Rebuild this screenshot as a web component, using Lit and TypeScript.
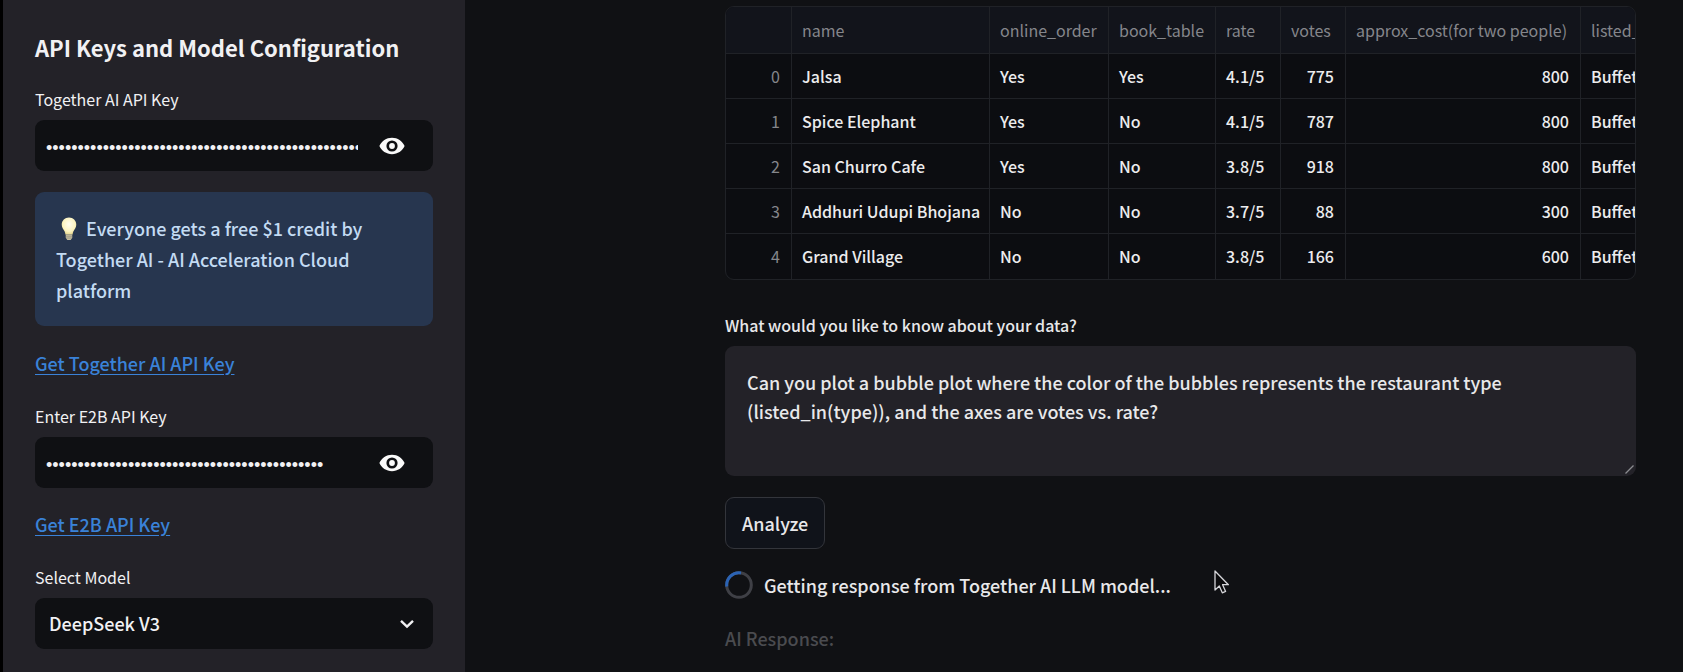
import { LitElement, html, css } from "lit";
import { customElement, property, state } from "lit/decorators.js";

interface Row {
  name: string;
  onlineOrder: string;
  bookTable: string;
  rate: string;
  votes: number;
  cost: number;
  listedIn: string;
}

const ROWS: Row[] = [
  { name: "Jalsa", onlineOrder: "Yes", bookTable: "Yes", rate: "4.1/5", votes: 775, cost: 800, listedIn: "Buffet" },
  { name: "Spice Elephant", onlineOrder: "Yes", bookTable: "No", rate: "4.1/5", votes: 787, cost: 800, listedIn: "Buffet" },
  { name: "San Churro Cafe", onlineOrder: "Yes", bookTable: "No", rate: "3.8/5", votes: 918, cost: 800, listedIn: "Buffet" },
  { name: "Addhuri Udupi Bhojana", onlineOrder: "No", bookTable: "No", rate: "3.7/5", votes: 88, cost: 300, listedIn: "Buffet" },
  { name: "Grand Village", onlineOrder: "No", bookTable: "No", rate: "3.8/5", votes: 166, cost: 600, listedIn: "Buffet" },
];

const base = css`
  *,
  *::before,
  *::after {
    box-sizing: border-box;
  }
  button,
  input,
  select,
  textarea {
    margin: 0;
    border: 0;
    font-family: inherit;
    font-weight: inherit;
    color: inherit;
  }
`;

@customElement("secret-field")
export class SecretField extends LitElement {
  @property() label = "";
  @property() value = "";
  @state() private shown = false;

  static styles = [
    base,
    css`
      :host {
        display: block;
      }
      .label {
        display: block;
        height: 33px;
        font-size: 16px;
        font-weight: 400;
        line-height: 24px;
      }
      .box {
        display: flex;
        height: 51px;
        border-radius: 9px;
        background: #0f1013;
      }
      .input {
        flex: 1;
        min-width: 0;
        margin: 0 7px 0 11px;
        padding: 5px 0 0;
        background: transparent;
        font-family: "Liberation Sans", sans-serif;
        font-size: 18px;
        outline: none;
      }
      .toggle {
        display: grid;
        place-items: center;
        width: 54px;
        margin-right: 14px;
        padding: 0;
        background: transparent;
        cursor: pointer;
      }
    `,
  ];

  render() {
    return html`
      <label class="label" for="field">${this.label}</label>
      <div class="box">
        <input
          class="input"
          id="field"
          type=${this.shown ? "text" : "password"}
          autocomplete="off"
          .value=${this.value}
        />
        <button
          class="toggle"
          type="button"
          aria-label="Show password text"
          @click=${() => (this.shown = !this.shown)}
        >
          <svg width="26" height="18" viewBox="0 0 26 18" aria-hidden="true">
            <path
              fill="#fafafa"
              fill-rule="evenodd"
              d="M13 .8C7.400.8 2.500 4.200.4 9c2.100 4.800 7 8.200 12.600 8.200S23.500 13.800 25.600 9C23.500 4.200 18.600.8 13 .8Zm0 13.800a5.600 5.600 0 1 1 0-11.200 5.600 5.600 0 0 1 0 11.200Zm0-2.700a2.900 2.900 0 1 0 0-5.800 2.900 2.900 0 0 0 0 5.800Z"
            />
          </svg>
        </button>
      </div>
    `;
  }
}

@customElement("config-sidebar")
export class ConfigSidebar extends LitElement {
  static styles = [
    base,
    css`
      :host {
        display: block;
        padding: 30px 32px 22px;
        background: #232228;
        color: #f1f1f3;
      }
      .title {
        margin: 0 0 23px;
        font-size: 22px;
        font-weight: 700;
        line-height: 34px;
      }
      .info {
        margin: 21px 0 22px;
        padding: 21px 21px 20px;
        border-radius: 9px;
        background: #27364f;
        color: #c3dbf3;
        font-size: 18px;
        line-height: 31px;
      }
      .info-text {
        margin: 0;
      }
      .bulb {
        margin: 0 5px 0 5px;
        vertical-align: -5px;
      }
      .link {
        display: block;
        width: fit-content;
        color: #3a82d8;
        font-size: 18px;
        line-height: 31px;
        text-underline-offset: 3px;
      }
      .link-first {
        margin-bottom: 25px;
      }
      .link-second {
        margin: 21px 0 25px;
      }
      .label {
        display: block;
        height: 33px;
        font-size: 16px;
        font-weight: 400;
        line-height: 24px;
      }
      .select-box {
        display: grid;
        align-items: center;
      }
      .select,
      .chevron {
        grid-area: 1 / 1;
      }
      .select {
        appearance: none;
        width: 100%;
        height: 51px;
        padding: 0 48px 2px 14px;
        border-radius: 9px;
        background: #0f1013;
        font-size: 18px;
      }
      .chevron {
        justify-self: end;
        margin-right: 18px;
        pointer-events: none;
      }
    `,
  ];

  render() {
    return html`
      <h2 class="title">API Keys and Model Configuration</h2>
      <secret-field label="Together AI API Key" .value=${"x".repeat(64)}></secret-field>
      <div class="info">
        <p class="info-text">
          <svg class="bulb" width="16" height="24" viewBox="0 0 16 26" aria-hidden="true">
            <defs>
              <radialGradient id="glow" cx="0.5" cy="0.4" r="0.6">
                <stop offset="0" stop-color="#fffdf0" />
                <stop offset="0.7" stop-color="#fbf3c0" />
                <stop offset="1" stop-color="#e6d78e" />
              </radialGradient>
            </defs>
            <path
              fill="url(#glow)"
              d="M8 .5C3.500.5.1 3.900.1 8.300c0 3.300 2.100 4.900 3.200 7.300.5 1.100.6 2.400.8 3.400h7.800c.2-1 .3-2.300.8-3.400 1.100-2.400 3.200-4 3.200-7.300C15.900 3.900 12.500.5 8 .5Z"
            />
            <path fill="#c6bf9f" d="M4.500 19h7v3.500L9.800 25H6.200l-1.700-2.500Z" />
            <path stroke="#8f8b7c" stroke-width="0.800" d="M4.500 20.800h7M4.800 22.800h6.400" />
          </svg>
          Everyone gets a free $1 credit by Together AI - AI Acceleration Cloud platform
        </p>
      </div>
      <a class="link link-first" href="#together">Get Together AI API Key</a>
      <secret-field label="Enter E2B API Key" .value=${"x".repeat(44)}></secret-field>
      <a class="link link-second" href="#e2b">Get E2B API Key</a>
      <label class="label" for="model">Select Model</label>
      <div class="select-box">
        <select class="select" id="model">
          <option>DeepSeek V3</option>
        </select>
        <svg class="chevron" width="16" height="10" viewBox="0 0 16 10" aria-hidden="true">
          <path fill="none" stroke="#f1f1f3" stroke-width="2.400" d="M2 1.800 8 7.600l6-5.800" />
        </svg>
      </div>
    `;
  }
}

@customElement("data-preview")
export class DataPreview extends LitElement {
  @property({ attribute: false }) rows: Row[] = [];

  static styles = [
    base,
    css`
      :host {
        display: block;
        overflow: hidden;
        border: 1px solid #202227;
        border-radius: 9px;
        background: #0c0d11;
      }
      .table {
        width: 1046px;
        border-collapse: separate;
        border-spacing: 0;
        table-layout: fixed;
        font-size: 16px;
        line-height: 24px;
        color: #ececee;
      }
      .c-index {
        width: 66px;
      }
      .c-name {
        width: 198px;
      }
      .c-online {
        width: 119px;
      }
      .c-book {
        width: 107px;
      }
      .c-small {
        width: 65px;
      }
      .c-cost {
        width: 235px;
      }
      .head,
      .cell {
        height: 45px;
        padding: 0 10px 1px;
        border-right: 1px solid #202227;
        border-bottom: 1px solid #202227;
        text-align: left;
        white-space: nowrap;
      }
      .head {
        height: 47px;
        background: #12141b;
        color: #85868b;
        font-weight: 400;
      }
      .row:last-child .cell {
        border-bottom: 0;
      }
      .num {
        padding-right: 11px;
        text-align: right;
      }
      .index {
        color: #85868b;
        font-weight: 400;
      }
    `,
  ];

  render() {
    return html`
      <table class="table">
        <colgroup>
          <col class="c-index" />
          <col class="c-name" />
          <col class="c-online" />
          <col class="c-book" />
          <col class="c-small" />
          <col class="c-small" />
          <col class="c-cost" />
          <col />
        </colgroup>
        <thead>
          <tr>
            <th class="head" scope="col"></th>
            <th class="head" scope="col">name</th>
            <th class="head" scope="col">online_order</th>
            <th class="head" scope="col">book_table</th>
            <th class="head" scope="col">rate</th>
            <th class="head" scope="col">votes</th>
            <th class="head" scope="col">approx_cost(for two people)</th>
            <th class="head" scope="col">listed_in(type)</th>
          </tr>
        </thead>
        <tbody>
          ${this.rows.map(
            (row, i) => html`
              <tr class="row">
                <th class="cell num index" scope="row">${i}</th>
                <td class="cell">${row.name}</td>
                <td class="cell">${row.onlineOrder}</td>
                <td class="cell">${row.bookTable}</td>
                <td class="cell">${row.rate}</td>
                <td class="cell num">${row.votes}</td>
                <td class="cell num">${row.cost}</td>
                <td class="cell">${row.listedIn}</td>
              </tr>
            `,
          )}
        </tbody>
      </table>
    `;
  }
}

@customElement("app-root")
export class AppRoot extends LitElement {
  static styles = [
    base,
    css`
      :host {
        display: grid;
        grid-template-columns: 462px minmax(0, 1fr);
        position: relative;
        min-height: 100vh;
        overflow: hidden;
        border-left: 3px solid #000;
        background: #101114;
        color: #e8e8ea;
        font-family: "Noto Sans CJK SC", "Noto Sans", sans-serif;
        font-weight: 500;
      }
      .main {
        display: flex;
        flex-direction: column;
        align-items: flex-start;
        padding: 6px 47px 0 260px;
      }
      .preview,
      .question {
        width: 100%;
      }
      .question {
        margin-top: 33px;
      }
      .label {
        display: block;
        height: 33px;
        font-size: 16px;
        line-height: 24px;
      }
      .area {
        display: grid;
      }
      .textarea,
      .grip {
        grid-area: 1 / 1;
      }
      .textarea {
        display: block;
        width: 100%;
        height: 130px;
        padding: 22px;
        border-radius: 9px;
        background: #232228;
        font-size: 18px;
        line-height: 29px;
        resize: none;
        outline: none;
      }
      .grip {
        place-self: end;
        margin: 0 2px 2px 0;
        pointer-events: none;
      }
      .analyze {
        height: 52px;
        margin-top: 21px;
        padding: 0 16px;
        border: 1px solid #33353b;
        border-radius: 9px;
        background: #10131a;
        font-size: 18px;
        line-height: 30px;
        cursor: pointer;
      }
      .status {
        display: flex;
        align-items: center;
        gap: 11px;
        margin-top: 21px;
        font-size: 18px;
        line-height: 30px;
      }
      .response {
        margin: 23px 0 0;
        color: #4a4b4f;
        font-size: 18px;
        line-height: 30px;
      }
      .pointer {
        position: absolute;
        top: 569px;
        left: 1210px;
        pointer-events: none;
      }
    `,
  ];

  render() {
    return html`
      <config-sidebar></config-sidebar>
      <main class="main">
        <data-preview class="preview" .rows=${ROWS}></data-preview>
        <div class="question">
          <label class="label" for="question">What would you like to know about your data?</label>
          <div class="area">
            <textarea class="textarea" id="question" spellcheck="false" .value=${
              "Can you plot a bubble plot where the color of the bubbles represents the restaurant type (listed_in(type)), and the axes are votes vs. rate?"
            }></textarea>
            <svg class="grip" width="9" height="9" viewBox="0 0 9 9" aria-hidden="true">
              <path stroke="#8b8b90" stroke-width="1.200" d="M.5 8.500 8.500.5" />
            </svg>
          </div>
        </div>
        <button class="analyze" type="button">Analyze</button>
        <div class="status" role="status">
          <svg width="28" height="28" viewBox="0 0 28 28" fill="none" stroke-width="3" aria-hidden="true">
            <circle cx="14" cy="14" r="12.300" stroke="#3f4046" />
            <path stroke="#2b63b4" d="M1.800 15.500A12.300 12.300 0 0 1 16 1.900" />
          </svg>
          Getting response from Together AI LLM model...
        </div>
        <p class="response">AI Response:</p>
      </main>
      <svg class="pointer" width="18" height="26" viewBox="0 0 18 26" aria-hidden="true">
        <path
          fill="#0b0b0d"
          stroke="#d6d6da"
          stroke-width="1.300"
          stroke-linejoin="round"
          d="M2 2v19l4.300-4 3 6.800 3.300-1.400-3-6.700h5.800Z"
        />
      </svg>
    `;
  }
}
